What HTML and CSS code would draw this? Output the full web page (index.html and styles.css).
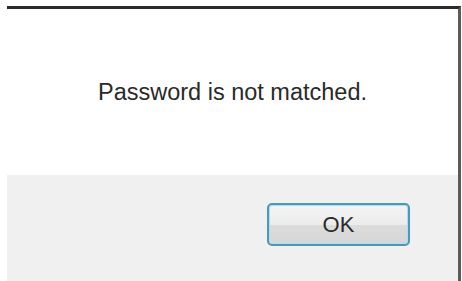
FILE: index.html
```html
<!DOCTYPE html>
<html>
<head>
<meta charset="utf-8">
<link rel="stylesheet" href="styles.css">
</head>
<body>
<div class="dialog">
  <div class="message">Password is not matched.</div>
  <div class="footer">
    <button class="ok">OK</button>
  </div>
</div>
</body>
</html>
```
FILE: styles.css
```css
html, body {
  margin: 0;
  padding: 0;
  background: #ffffff;
  width: 462px;
  height: 281px;
  overflow: hidden;
}
.dialog {
  margin: 6px 1px 0 7px;
  height: 275px;
  border-top: 3px solid #2b2b2b;
  border-right: 3px solid #5a5a5a;
  display: flex;
  flex-direction: column;
  font-family: "Liberation Sans", Arial, sans-serif;
  color: #2a2a2a;
}
.message {
  height: 166px;
  display: flex;
  align-items: center;
  justify-content: center;
  font-size: 23.5px;
  padding-top: 1px;
  box-sizing: border-box;
}
.footer {
  flex: 1;
  background: #f0f0f0;
  display: flex;
  justify-content: flex-end;
  align-items: flex-start;
  padding: 28px 48px 0 0;
}
.ok {
  width: 143px;
  height: 43px;
  border: 2px solid #4f97b3;
  border-radius: 5px;
  box-shadow: inset 0 0 0 1px #a8dff2;
  background: linear-gradient(#f4f4f4 0%, #ececec 50%, #dcdcdc 51%, #d6d6d6 100%);
  font-family: "Liberation Sans", Arial, sans-serif;
  font-size: 22px;
  color: #2a2a2a;
  padding: 0;
}
```
